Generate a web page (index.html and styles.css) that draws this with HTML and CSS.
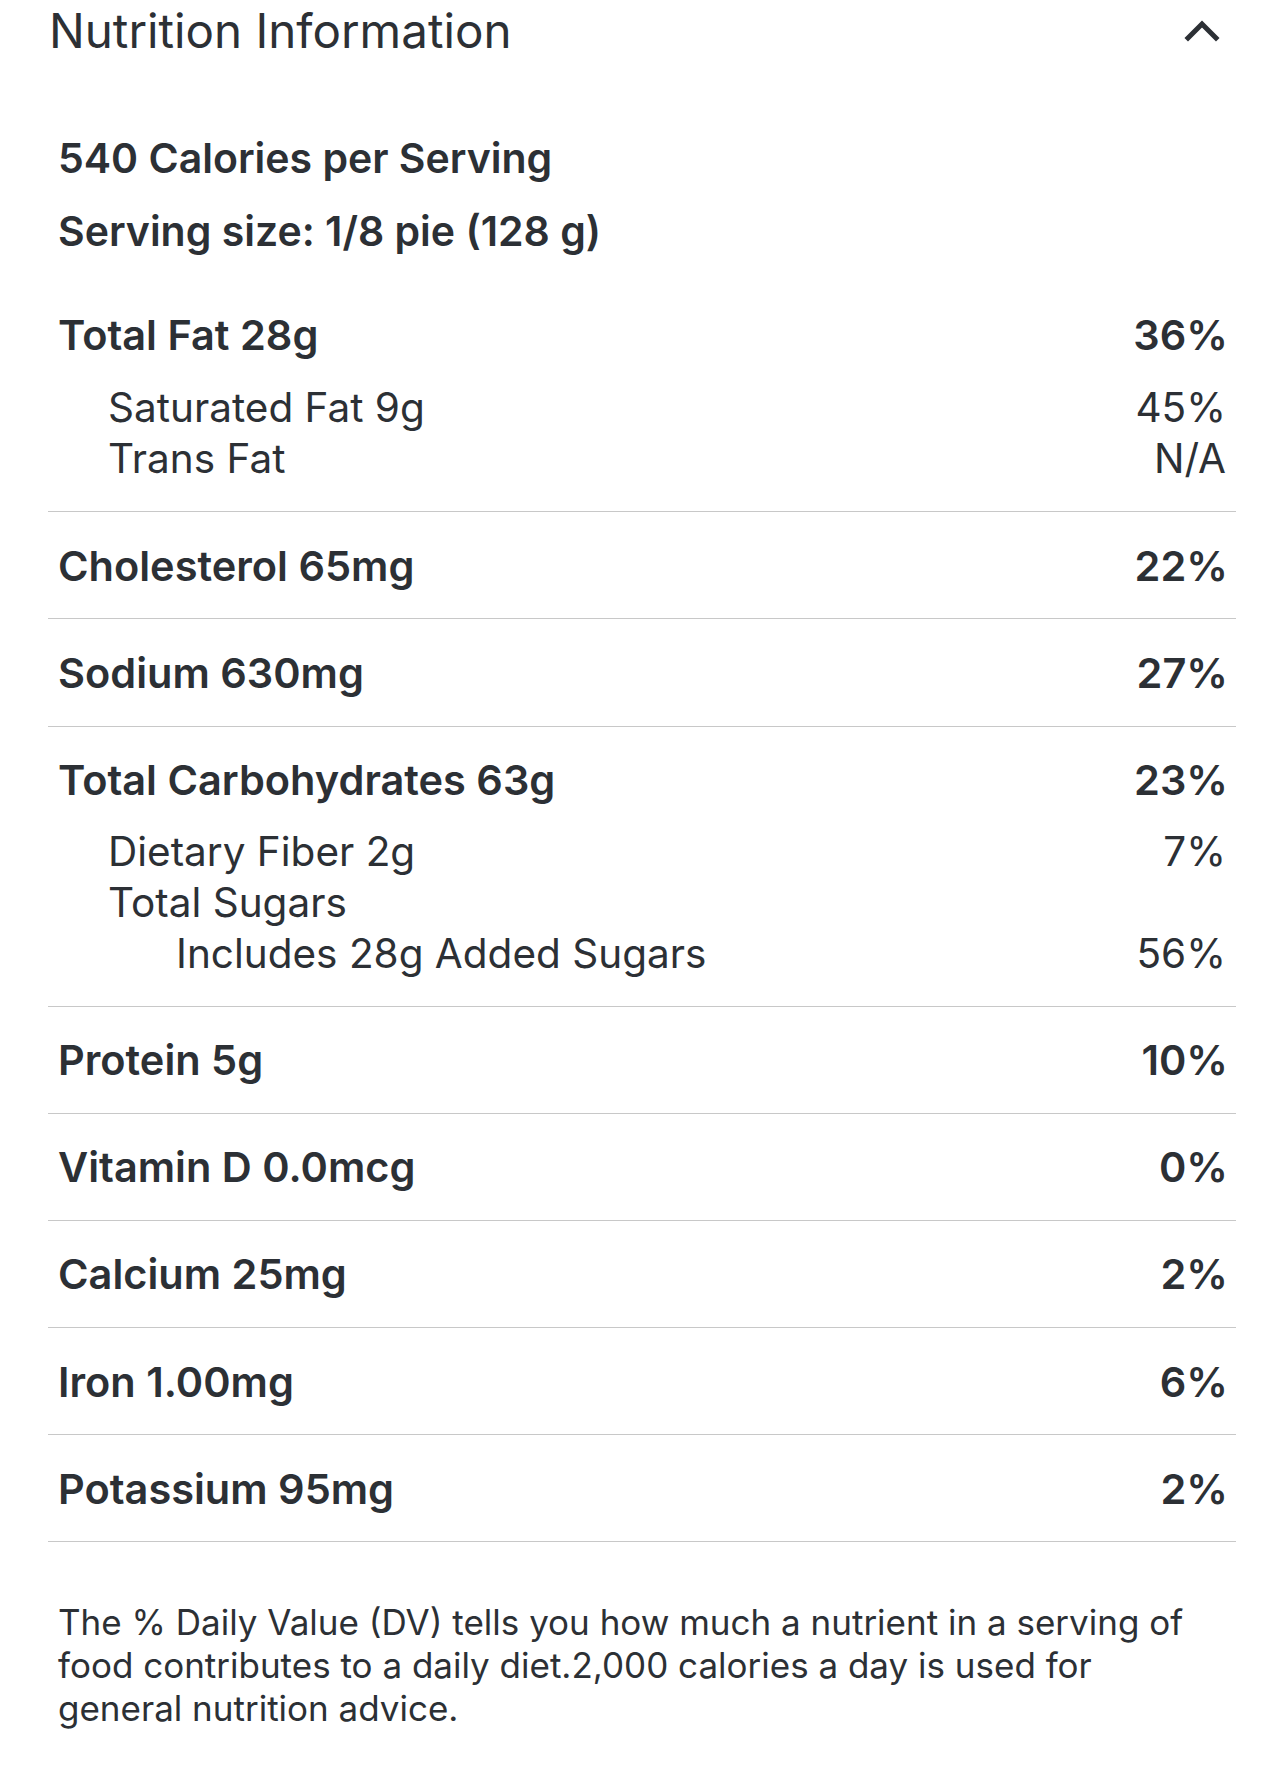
FILE: index.html
```html
<!DOCTYPE html>
<html lang="en">
<head>
<meta charset="utf-8">
<title>Nutrition Information</title>
<link rel="stylesheet" href="styles.css">
</head>
<body>
<div class="panel">
  <div class="header">
    <h2 class="title">Nutrition Information</h2>
    <svg class="chevron" width="36" height="24" viewBox="0 0 36 24" aria-hidden="true">
      <path d="M4 20 L18 6 L32 20" fill="none" stroke="#2c3035" stroke-width="5" stroke-linecap="square"/>
    </svg>
  </div>

  <div class="summary">
    <div class="summary-line">540 Calories per Serving</div>
    <div class="summary-line">Serving size: 1/8 pie (128 g)</div>
  </div>

  <div class="section first">
    <div class="row main"><span>Total Fat 28g</span><span>36%</span></div>
    <div class="subs">
      <div class="row sub"><span>Saturated Fat 9g</span><span>45%</span></div>
      <div class="row sub"><span>Trans Fat</span><span>N/A</span></div>
    </div>
  </div>

  <div class="section">
    <div class="row main"><span>Cholesterol 65mg</span><span>22%</span></div>
  </div>

  <div class="section">
    <div class="row main"><span>Sodium 630mg</span><span>27%</span></div>
  </div>

  <div class="section">
    <div class="row main"><span>Total Carbohydrates 63g</span><span>23%</span></div>
    <div class="subs">
      <div class="row sub"><span>Dietary Fiber 2g</span><span>7%</span></div>
      <div class="row sub"><span>Total Sugars</span><span></span></div>
      <div class="row sub deep"><span>Includes 28g Added Sugars</span><span>56%</span></div>
    </div>
  </div>

  <div class="section">
    <div class="row main"><span>Protein 5g</span><span>10%</span></div>
  </div>

  <div class="section">
    <div class="row main"><span>Vitamin D 0.0mcg</span><span>0%</span></div>
  </div>

  <div class="section">
    <div class="row main"><span>Calcium 25mg</span><span>2%</span></div>
  </div>

  <div class="section">
    <div class="row main"><span>Iron 1.00mg</span><span>6%</span></div>
  </div>

  <div class="section last">
    <div class="row main"><span>Potassium 95mg</span><span>2%</span></div>
  </div>

  <p class="footnote">The % Daily Value (DV) tells you how much a nutrient in a serving of food contributes to a daily diet.2,000 calories a day is used for general nutrition advice.</p>
</div>
</body>
</html>
```

FILE: styles.css
```css
html, body {
  margin: 0;
  padding: 0;
  background: #ffffff;
}

body {
  font-family: Inter, "Noto Sans", "Liberation Sans", sans-serif;
  color: #2c3035;
}

.panel {
  padding: 0 48px;
}

.header {
  height: 62px;
  display: flex;
  align-items: center;
  justify-content: space-between;
  padding-left: 1px;
  padding-right: 16px;
}

.title {
  margin: 0;
  font-size: 47.5px;
  font-weight: 400;
  line-height: 62px;
}

.chevron {
  display: block;
  margin-top: -2px;
}

.summary {
  margin-top: 71px;
  padding: 0 11px 0 10px;
  display: flex;
  flex-direction: column;
  gap: 23px;
}

.summary-line {
  font-size: 41px;
  font-weight: 600;
  line-height: 50px;
}

.section {
  padding: 28px 10px 27.2px 10px;
  border-bottom: 1px solid #c8c8c8;
}

.section.first {
  margin-top: 53px;
  padding-top: 0;
}

.row {
  display: flex;
  justify-content: space-between;
  align-items: center;
}

.row.main {
  height: 51px;
  font-size: 41.5px;
  font-weight: 600;
  margin-right: -2px;
}

.subs {
  margin-top: 22px;
}

.row.sub {
  height: 51px;
  font-size: 40.5px;
  font-weight: 400;
  padding-left: 50px;
}

.section:not(.first) .subs {
  margin-top: 21px;
}

.section:not(.first) .row.sub {
  height: 50.6px;
}

.row.sub.deep {
  padding-left: 118px;
}

.footnote {
  margin: 59px 0 0 0;
  padding: 0 20px 0 10px;
  font-size: 35px;
  line-height: 43px;
  font-weight: 400;
}
```
